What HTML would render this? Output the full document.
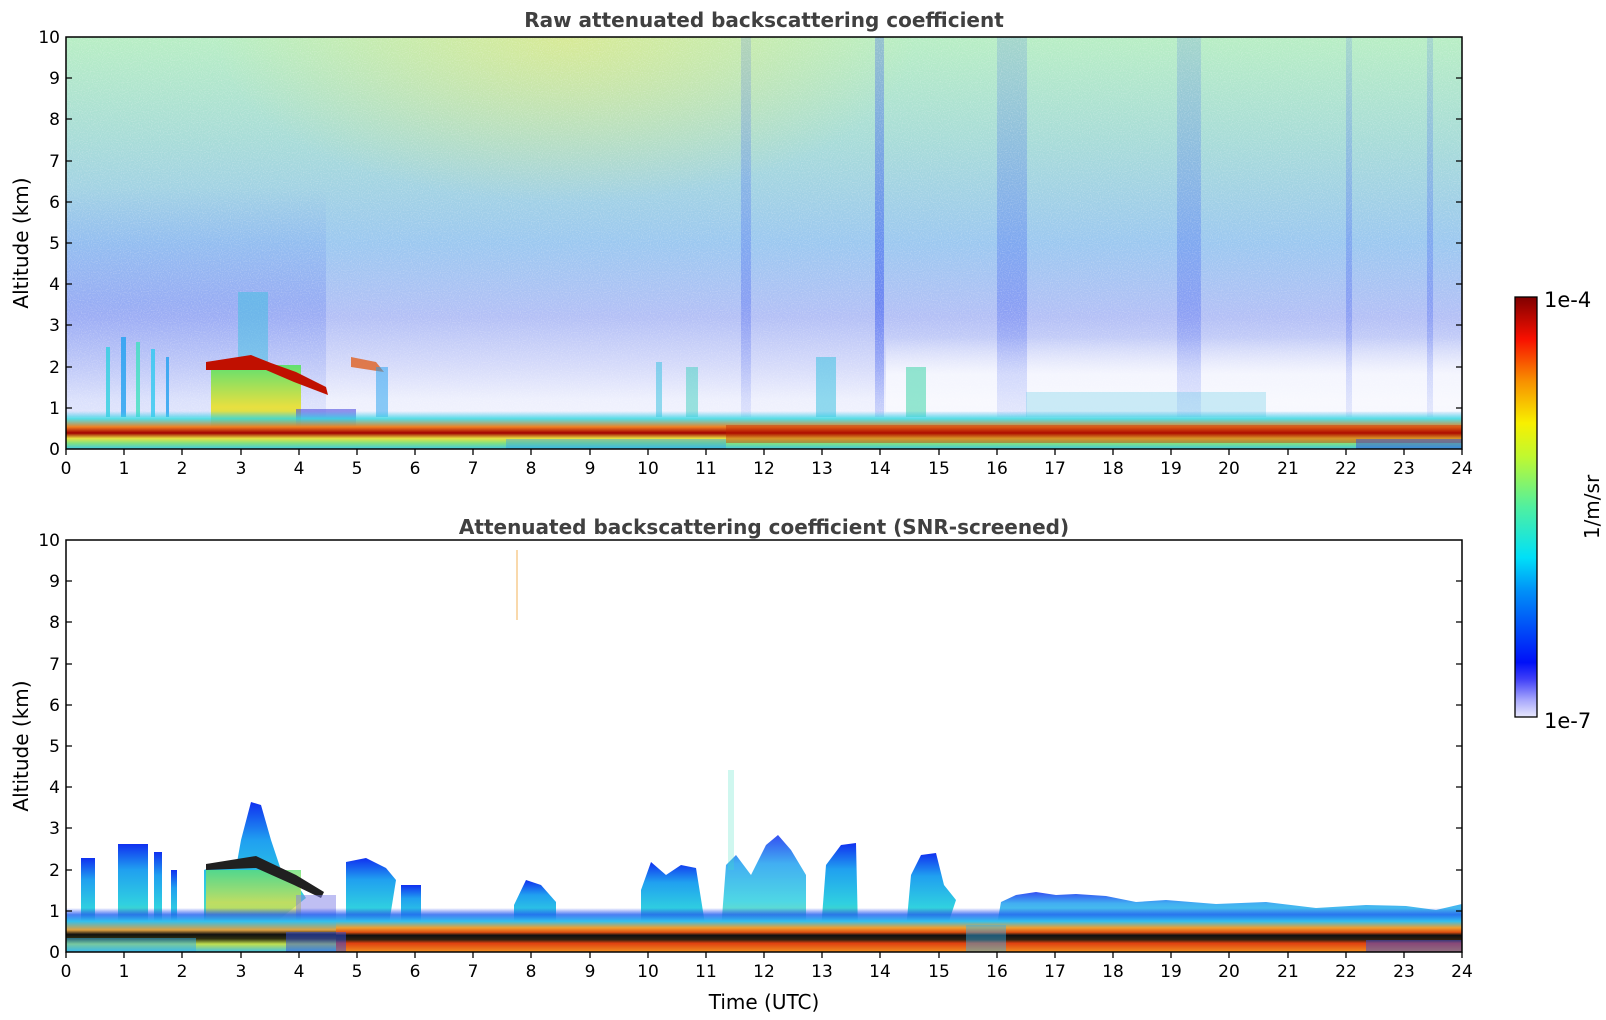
<!DOCTYPE html>
<html><head><meta charset="utf-8"><style>
html,body{margin:0;padding:0;background:#fff;}
svg{display:block;font-family:"DejaVu Sans","Liberation Sans",sans-serif;}
</style></head><body>
<svg width="1606" height="1020" viewBox="0 0 1606 1020" xmlns="http://www.w3.org/2000/svg">
<defs>
<filter id="noise" x="0" y="0" width="100%" height="100%">
<feTurbulence type="fractalNoise" baseFrequency="0.9" numOctaves="1" seed="3"/>
<feColorMatrix type="matrix" values="0 0 0 0 1  0 0 0 0 1  0 0 0 0 1  0 0 0 1.2 -0.55"/>
</filter>
<linearGradient id="base" x1="0" y1="0" x2="0" y2="1">
<stop offset="0" stop-color="#b8eec4"/>
<stop offset="0.25" stop-color="#a8dcd8"/>
<stop offset="0.5" stop-color="#9cc8f0"/>
<stop offset="0.68" stop-color="#b4c0f6"/>
<stop offset="0.8" stop-color="#d6dbfa"/>
<stop offset="0.88" stop-color="#eef0fd"/>
<stop offset="1" stop-color="#f4f5fd"/>
</linearGradient>
<radialGradient id="yel" cx="0.5" cy="0" r="0.5">
<stop offset="0" stop-color="#f0e670" stop-opacity="0.55"/>
<stop offset="1" stop-color="#f0e670" stop-opacity="0"/>
</radialGradient>
<linearGradient id="leftblue" x1="0" y1="0" x2="0" y2="1">
<stop offset="0" stop-color="#5070f0" stop-opacity="0"/>
<stop offset="0.5" stop-color="#5070f0" stop-opacity="0.25"/>
<stop offset="1" stop-color="#5070f0" stop-opacity="0.1"/>
</linearGradient>
<linearGradient id="whiteR" x1="0" y1="0" x2="0" y2="1">
<stop offset="0" stop-color="#fff" stop-opacity="0"/>
<stop offset="0.5" stop-color="#fff" stop-opacity="0.7"/>
<stop offset="1" stop-color="#fff" stop-opacity="0.5"/>
</linearGradient>
<linearGradient id="stripe" x1="0" y1="0" x2="0" y2="1">
<stop offset="0" stop-color="#3050f0" stop-opacity="0.15"/>
<stop offset="0.7" stop-color="#3050f0" stop-opacity="0.3"/>
<stop offset="1" stop-color="#3050f0" stop-opacity="0.1"/>
</linearGradient>
<linearGradient id="surf1" x1="0" y1="0" x2="0" y2="1">
<stop offset="0" stop-color="#40c0f0" stop-opacity="0"/>
<stop offset="0.2" stop-color="#30d8e0" stop-opacity="0.8"/>
<stop offset="0.42" stop-color="#f08020"/>
<stop offset="0.58" stop-color="#a00000"/>
<stop offset="0.72" stop-color="#e8e040"/>
<stop offset="0.85" stop-color="#80e080"/>
<stop offset="1" stop-color="#40c8e8"/>
</linearGradient>
<linearGradient id="surf2" x1="0" y1="0" x2="0" y2="1">
<stop offset="0" stop-color="#2040f0" stop-opacity="0"/>
<stop offset="0.15" stop-color="#2060f0" stop-opacity="0.8"/>
<stop offset="0.3" stop-color="#30c0f0"/>
<stop offset="0.45" stop-color="#f0a030"/>
<stop offset="0.55" stop-color="#e05010"/>
<stop offset="0.62" stop-color="#101010"/>
<stop offset="0.72" stop-color="#302010"/>
<stop offset="0.8" stop-color="#e04010"/>
<stop offset="1" stop-color="#f09020"/>
</linearGradient>
<linearGradient id="surf2l" x1="0" y1="0" x2="0" y2="1">
<stop offset="0" stop-color="#2040f0" stop-opacity="0"/>
<stop offset="0.15" stop-color="#2060f0" stop-opacity="0.8"/>
<stop offset="0.3" stop-color="#30c0f0"/>
<stop offset="0.5" stop-color="#e0a040"/>
<stop offset="0.6" stop-color="#101010"/>
<stop offset="0.7" stop-color="#303010"/>
<stop offset="0.82" stop-color="#c0e050"/>
<stop offset="1" stop-color="#40c0e8"/>
</linearGradient>
<linearGradient id="cloud" x1="0" y1="0" x2="0" y2="1">
<stop offset="0" stop-color="#1030f0"/>
<stop offset="0.3" stop-color="#20a0f0"/>
<stop offset="0.7" stop-color="#30d0e0"/>
<stop offset="1" stop-color="#70e090"/>
</linearGradient>
<linearGradient id="blk" x1="0" y1="0" x2="0" y2="1">
<stop offset="0" stop-color="#60e070"/>
<stop offset="0.5" stop-color="#e8e040"/>
<stop offset="1" stop-color="#a0e070"/>
</linearGradient>
<linearGradient id="jet" x1="0" y1="1" x2="0" y2="0">
<stop offset="0" stop-color="#e8e8fc"/>
<stop offset="0.04" stop-color="#a8a8fc"/>
<stop offset="0.09" stop-color="#4040f8"/>
<stop offset="0.13" stop-color="#0010f8"/>
<stop offset="0.3" stop-color="#0090f8"/>
<stop offset="0.38" stop-color="#00e0f8"/>
<stop offset="0.5" stop-color="#50f0a0"/>
<stop offset="0.62" stop-color="#c0f830"/>
<stop offset="0.7" stop-color="#f8f000"/>
<stop offset="0.8" stop-color="#f89000"/>
<stop offset="0.9" stop-color="#f81000"/>
<stop offset="1" stop-color="#800000"/>
</linearGradient>
<clipPath id="c"><rect x="0" y="0" width="1396" height="412"/></clipPath>
</defs>

<text x="764" y="27" text-anchor="middle" font-size="20" font-weight="bold" fill="#404040">Raw attenuated backscattering coefficient</text>
<text x="764" y="534" text-anchor="middle" font-size="20" font-weight="bold" fill="#404040">Attenuated backscattering coefficient (SNR-screened)</text>

<!-- PLOT 1 -->
<g transform="translate(66,37)" clip-path="url(#c)">
<rect width="1396" height="412" fill="url(#base)"/>
<rect x="150" y="0" width="700" height="330" fill="url(#yel)"/>
<rect x="0" y="150" width="260" height="230" fill="url(#leftblue)"/>
<rect x="820" y="300" width="576" height="75" fill="url(#whiteR)"/>
<rect x="675" y="0" width="10" height="380" fill="url(#stripe)"/>
<rect x="809" y="0" width="9" height="380" fill="url(#stripe)"/>
<rect x="809" y="0" width="9" height="380" fill="url(#stripe)"/>
<rect x="931" y="0" width="30" height="380" fill="url(#stripe)"/>
<rect x="1111" y="0" width="24" height="380" fill="url(#stripe)"/>
<rect x="1280" y="0" width="6" height="380" fill="url(#stripe)"/>
<rect x="1361" y="0" width="6" height="380" fill="url(#stripe)"/>
<rect width="1396" height="380" filter="url(#noise)" opacity="0.6"/>
<rect x="40" y="310" width="4" height="70" fill="#30d0e0" opacity="0.8"/>
<rect x="55" y="300" width="5" height="80" fill="#20a0f0" opacity="0.8"/>
<rect x="70" y="305" width="4" height="75" fill="#40e0c0" opacity="0.8"/>
<rect x="85" y="312" width="4" height="68" fill="#30c8f0" opacity="0.8"/>
<rect x="100" y="320" width="3" height="60" fill="#20a0f0" opacity="0.8"/>
<rect x="145" y="328" width="90" height="84" fill="url(#blk)"/>
<rect x="172" y="255" width="30" height="75" fill="#40c0e0" opacity="0.5"/>
<polygon points="140,325 185,318 205,326 230,335 260,350 262,358 228,345 200,333 140,333" fill="#c01000"/>
<rect x="230" y="372" width="60" height="40" fill="#5050e0" opacity="0.6"/>
<polygon points="285,320 310,325 318,335 285,330" fill="#e06020" opacity="0.8"/>
<rect x="310" y="330" width="12" height="50" fill="#20a0f0" opacity="0.5"/>
<rect x="590" y="325" width="6" height="55" fill="#30c0e0" opacity="0.5"/>
<rect x="620" y="330" width="12" height="50" fill="#40d0c0" opacity="0.5"/>
<rect x="750" y="320" width="20" height="60" fill="#30c0e0" opacity="0.5"/>
<rect x="840" y="330" width="20" height="50" fill="#50d8b0" opacity="0.6"/>
<rect x="960" y="355" width="240" height="25" fill="#40c0e0" opacity="0.25"/>
<rect x="0" y="374" width="1396" height="38" fill="url(#surf1)"/>
<rect x="660" y="388" width="736" height="18" fill="#c02000" opacity="0.4"/>
<rect x="1290" y="402" width="106" height="10" fill="#3050e0" opacity="0.5"/>
<rect x="440" y="402" width="220" height="10" fill="#30a0f0" opacity="0.4"/>
</g>
<rect x="66" y="37" width="1396" height="412" fill="none" stroke="#000" stroke-width="1.5"/>

<!-- PLOT 2 -->
<g transform="translate(66,540)" clip-path="url(#c)">
<rect width="1396" height="412" fill="#fff"/>
<rect x="15" y="318" width="14" height="72" fill="url(#cloud)"/>
<rect x="52" y="304" width="30" height="86" fill="url(#cloud)"/>
<rect x="88" y="312" width="8" height="78" fill="url(#cloud)"/>
<rect x="105" y="330" width="6" height="60" fill="url(#cloud)"/>
<polygon points="138,330 150,325 170,328 175,300 185,262 195,265 205,300 215,330 228,340 240,358 200,390 138,390" fill="url(#cloud)"/>
<rect x="140" y="330" width="95" height="65" fill="url(#blk)" opacity="0.75"/>
<polygon points="140,324 190,316 230,335 258,352 255,358 228,345 190,328 140,330" fill="#202020"/>
<rect x="230" y="355" width="40" height="40" fill="#8080e8" opacity="0.5"/>
<polygon points="280,322 300,318 320,328 330,340 322,390 280,390" fill="url(#cloud)"/>
<rect x="335" y="345" width="20" height="45" fill="url(#cloud)"/>
<polygon points="448,365 460,340 475,345 490,362 490,390 448,390" fill="url(#cloud)"/>
<polygon points="575,350 585,322 600,335 615,325 630,328 640,390 575,390" fill="url(#cloud)"/>
<polygon points="655,390 660,325 670,315 685,335 700,305 712,295 725,310 740,335 740,390" fill="url(#cloud)" opacity="0.85"/>
<polygon points="755,390 760,325 775,305 790,303 792,390" fill="url(#cloud)"/>
<polygon points="840,390 845,335 855,315 870,313 878,345 890,360 880,390" fill="url(#cloud)"/>
<polygon points="930,390 935,362 950,355 970,352 990,355 1010,354 1040,356 1070,362 1100,360 1150,364 1200,362 1250,368 1300,365 1340,366 1370,370 1396,364 1396,390" fill="url(#cloud)" opacity="0.85"/>
<rect x="0" y="368" width="270" height="44" fill="url(#surf2l)"/>
<rect x="270" y="368" width="1126" height="44" fill="url(#surf2)"/>
<rect x="0" y="398" width="130" height="14" fill="#30b0f0" opacity="0.5"/>
<rect x="220" y="392" width="60" height="20" fill="#3050e0" opacity="0.5"/>
<rect x="900" y="385" width="40" height="27" fill="#30b0f0" opacity="0.45"/>
<rect x="1300" y="400" width="96" height="12" fill="#3050e0" opacity="0.5"/>
<rect x="662" y="230" width="6" height="100" fill="#40e0c0" opacity="0.25"/>
<rect x="450" y="10" width="2" height="70" fill="#f0a030" opacity="0.4"/>
</g>
<rect x="66" y="540" width="1396" height="412" fill="none" stroke="#000" stroke-width="1.5"/>

<g stroke="#000" stroke-width="1.3">
<path d="M66 408h6M66 367h6M66 325h6M66 284h6M66 243h6M66 202h6M66 161h6M66 119h6M66 78h6M1462 408h-6M1462 367h-6M1462 325h-6M1462 284h-6M1462 243h-6M1462 202h-6M1462 161h-6M1462 119h-6M1462 78h-6"/>
<path d="M66 911h6M66 870h6M66 828h6M66 787h6M66 746h6M66 705h6M66 664h6M66 622h6M66 581h6M1462 911h-6M1462 870h-6M1462 828h-6M1462 787h-6M1462 746h-6M1462 705h-6M1462 664h-6M1462 622h-6M1462 581h-6"/>
<path d="M66 449v6M124 449v6M182 449v6M241 449v6M299 449v6M357 449v6M415 449v6M473 449v6M531 449v6M590 449v6M648 449v6M706 449v6M764 449v6M822 449v6M880 449v6M939 449v6M997 449v6M1055 449v6M1113 449v6M1171 449v6M1229 449v6M1288 449v6M1346 449v6M1404 449v6M1462 449v6"/>
<path d="M66 952v6M124 952v6M182 952v6M241 952v6M299 952v6M357 952v6M415 952v6M473 952v6M531 952v6M590 952v6M648 952v6M706 952v6M764 952v6M822 952v6M880 952v6M939 952v6M997 952v6M1055 952v6M1113 952v6M1171 952v6M1229 952v6M1288 952v6M1346 952v6M1404 952v6M1462 952v6"/>
</g>

<g font-size="17" fill="#000" text-anchor="end">
<text x="60" y="455">0</text><text x="60" y="414">1</text><text x="60" y="373">2</text><text x="60" y="331">3</text><text x="60" y="290">4</text><text x="60" y="249">5</text><text x="60" y="208">6</text><text x="60" y="167">7</text><text x="60" y="125">8</text><text x="60" y="84">9</text><text x="60" y="43">10</text>
<text x="60" y="958">0</text><text x="60" y="917">1</text><text x="60" y="876">2</text><text x="60" y="834">3</text><text x="60" y="793">4</text><text x="60" y="752">5</text><text x="60" y="711">6</text><text x="60" y="670">7</text><text x="60" y="628">8</text><text x="60" y="587">9</text><text x="60" y="546">10</text>
</g>
<g font-size="17" fill="#000" text-anchor="middle">
<text x="66" y="474">0</text><text x="124" y="474">1</text><text x="182" y="474">2</text><text x="241" y="474">3</text><text x="299" y="474">4</text><text x="357" y="474">5</text><text x="415" y="474">6</text><text x="473" y="474">7</text><text x="531" y="474">8</text><text x="590" y="474">9</text><text x="648" y="474">10</text><text x="706" y="474">11</text><text x="764" y="474">12</text><text x="822" y="474">13</text><text x="880" y="474">14</text><text x="939" y="474">15</text><text x="997" y="474">16</text><text x="1055" y="474">17</text><text x="1113" y="474">18</text><text x="1171" y="474">19</text><text x="1229" y="474">20</text><text x="1288" y="474">21</text><text x="1346" y="474">22</text><text x="1404" y="474">23</text><text x="1462" y="474">24</text>
<text x="66" y="977">0</text><text x="124" y="977">1</text><text x="182" y="977">2</text><text x="241" y="977">3</text><text x="299" y="977">4</text><text x="357" y="977">5</text><text x="415" y="977">6</text><text x="473" y="977">7</text><text x="531" y="977">8</text><text x="590" y="977">9</text><text x="648" y="977">10</text><text x="706" y="977">11</text><text x="764" y="977">12</text><text x="822" y="977">13</text><text x="880" y="977">14</text><text x="939" y="977">15</text><text x="997" y="977">16</text><text x="1055" y="977">17</text><text x="1113" y="977">18</text><text x="1171" y="977">19</text><text x="1229" y="977">20</text><text x="1288" y="977">21</text><text x="1346" y="977">22</text><text x="1404" y="977">23</text><text x="1462" y="977">24</text>
</g>

<text x="764" y="1009" text-anchor="middle" font-size="20" fill="#000">Time (UTC)</text>
<text transform="translate(28,243) rotate(-90)" text-anchor="middle" font-size="20" fill="#000">Altitude (km)</text>
<text transform="translate(28,746) rotate(-90)" text-anchor="middle" font-size="20" fill="#000">Altitude (km)</text>

<rect x="1515" y="297" width="22" height="420" fill="url(#jet)" stroke="#000" stroke-width="1.3"/>
<text x="1544" y="307" font-size="21" fill="#000">1e-4</text>
<text x="1544" y="728" font-size="21" fill="#000">1e-7</text>
<text transform="translate(1599,507) rotate(-90)" text-anchor="middle" font-size="20" fill="#000">1/m/sr</text>
</svg>
</body></html>
